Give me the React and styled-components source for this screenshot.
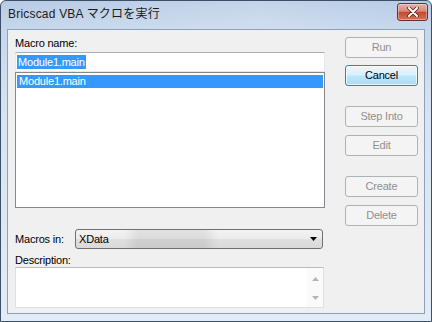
import React from 'react'
import styled, { createGlobalStyle } from 'styled-components'

const GlobalStyle = createGlobalStyle`
  html, body {
    margin: 0;
    padding: 0;
    background: #ffffff;
  }
  body {
    font-family: "Liberation Sans", Arial, sans-serif;
    font-size: 11px;
    letter-spacing: -0.2px;
    color: #000;
  }
`

const Window = styled.div`
  width: 432px;
  height: 322px;
  box-sizing: border-box;
  border: 1px solid #3b5066;
  border-radius: 6px 6px 0 0;
  background: linear-gradient(to bottom, #b7cbe4 0px, #c6d7ec 28px, #d8e4f2 120px, #e3ebf6 100%);
  display: flex;
  flex-direction: column;
  overflow: hidden;
`

const TitleBar = styled.div`
  height: 28px;
  flex: none;
  display: flex;
  align-items: flex-start;
  padding-left: 7px;
  background: linear-gradient(to right, rgba(255,255,255,0) 0%, rgba(255,255,255,0.18) 60%, rgba(255,255,255,0) 100%);
`

const Title = styled.div`
  margin-top: 5px;
  font-size: 12px;
  letter-spacing: 0.2px;
  line-height: 16px;
  color: #1b1b1b;
  font-family: "Liberation Sans", "Noto Sans CJK JP", sans-serif;
`

const CloseButton = styled.div`
  margin: 2px 3px 0 auto;
  width: 31px;
  height: 18px;
  box-sizing: border-box;
  border: 1px solid #6e3025;
  border-radius: 3px;
  background: linear-gradient(to bottom, #e7b1a6 0%, #d9887a 45%, #c44a32 52%, #d2735a 100%);
  box-shadow: inset 0 0 0 1px rgba(255, 255, 255, 0.35);
  display: flex;
  align-items: center;
  justify-content: center;
`

const Frame = styled.div`
  flex: 1;
  display: flex;
  padding: 0 6px 7px 6px;
`

const Client = styled.div`
  flex: 1;
  display: flex;
  background: #f0f0f0;
  border: 1px solid #8ca1ba;
  padding: 7px 6px 0 7px;
`

const LeftColumn = styled.div`
  width: 310px;
  display: flex;
  flex-direction: column;
`

const Label = styled.div`
  line-height: 13px;
  height: 13px;
  margin-bottom: ${p => p.$mb || 0}px;
  margin-top: ${p => p.$mt || 0}px;
  white-space: nowrap;
`

const NameInput = styled.div`
  height: 20px;
  box-sizing: border-box;
  background: #fff;
  border: 1px solid #e3e9ef;
  border-top-color: #abadb3;
  padding: 2px 1px 0 1px;
`

const Selected = styled.span`
  display: inline-block;
  background: #3399ff;
  color: #fff;
  line-height: 14px;
  padding: 0 1px 0 1px;
`

const ListBox = styled.div`
  height: 136px;
  box-sizing: border-box;
  background: #fff;
  border: 1px solid #828790;
  padding: 2px 1px;
`

const ListItem = styled.div`
  background: ${p => (p.$selected ? '#3399ff' : 'transparent')};
  color: ${p => (p.$selected ? '#fff' : '#000')};
  line-height: 13px;
  padding-left: 2px;
`

const ComboRow = styled.div`
  display: flex;
  align-items: center;
  margin-top: 21px;
  height: 20px;
`

const ComboLabel = styled.div`
  width: 60px;
  flex: none;
`

const Combo = styled.div`
  flex: 1;
  height: 20px;
  box-sizing: border-box;
  margin-right: 2px;
  border: 1px solid #707070;
  border-radius: 3px;
  background:
    linear-gradient(to right, rgba(0,0,0,0) 48px, rgba(0,0,0,0.07) 62px, rgba(0,0,0,0.07) 128px, rgba(0,0,0,0) 142px),
    linear-gradient(to bottom, #f3f3f3 0%, #ebebeb 50%, #e0e0e0 51%, #d9d9d9 100%);
  display: flex;
  align-items: center;
  padding: 0 5px 0 3px;
`

const ComboText = styled.div`
  flex: 1;
  line-height: 13px;
`

const DescBox = styled.div`
  margin-top: 0;
  height: 41px;
  box-sizing: border-box;
  margin-right: 1px;
  background: #fff;
  border: 1px solid #dcdfe3;
  border-top-color: #b9bcc1;
  display: flex;
  justify-content: flex-end;
`

const ScrollBar = styled.div`
  width: 16px;
  display: flex;
  flex-direction: column;
  justify-content: space-between;
  align-items: center;
  padding: 9px 0 7px;
  background: #fafafa;
`

const ButtonColumn = styled.div`
  margin-left: 20px;
  width: 73px;
  display: flex;
  flex-direction: column;
  padding-top: 0;
`

const Button = styled.div`
  height: 21px;
  box-sizing: border-box;
  margin-top: ${p => p.$mt || 0}px;
  border: 1px solid ${p => (p.$focused ? '#3c7fb1' : '#adb2b5')};
  border-radius: 3px;
  background: ${p =>
    p.$focused
      ? 'linear-gradient(to bottom, #eaf6fd 0%, #d9f0fc 48%, #bee6fd 52%, #a9dbf6 100%)'
      : '#f4f4f4'};
  box-shadow: ${p => (p.$focused ? 'inset 0 0 0 1px rgba(255,255,255,0.7)' : 'none')};
  color: ${p => (p.$focused ? '#000' : '#8f8f8f')};
  display: flex;
  align-items: center;
  justify-content: center;
  line-height: 13px;
`

const Arrow = ({ dir, color }) => (
  <svg width="7" height="4" viewBox="0 0 7 4">
    {dir === 'up'
      ? <polygon points="0,4 7,4 3.5,0" fill={color} />
      : <polygon points="0,0 7,0 3.5,4" fill={color} />}
  </svg>
)

const CloseIcon = () => (
  <svg width="12" height="10" viewBox="0 0 12 10">
    <path d="M2 1 L10 9 M10 1 L2 9" stroke="#5b2016" strokeWidth="3.6" strokeLinecap="round" />
    <path d="M2 1 L10 9 M10 1 L2 9" stroke="#ffffff" strokeWidth="2" strokeLinecap="round" />
  </svg>
)

const App = () => {
  const macros = ['Module1.main']
  return (
    <>
      <GlobalStyle />
      <Window>
        <TitleBar>
          <Title>Bricscad VBA マクロを実行</Title>
          <CloseButton><CloseIcon /></CloseButton>
        </TitleBar>
        <Frame>
          <Client>
            <LeftColumn>
              <Label $mb={2}>Macro name:</Label>
              <NameInput><Selected>Module1.main</Selected></NameInput>
              <ListBox>
                {macros.map((m, i) => (
                  <ListItem key={m} $selected={i === 0}>{m}</ListItem>
                ))}
              </ListBox>
              <ComboRow>
                <ComboLabel>Macros in:</ComboLabel>
                <Combo>
                  <ComboText>XData</ComboText>
                  <Arrow dir="down" color="#000" />
                </Combo>
              </ComboRow>
              <Label $mt={5}>Description:</Label>
              <DescBox>
                <ScrollBar>
                  <Arrow dir="up" color="#b4b4b4" />
                  <Arrow dir="down" color="#b4b4b4" />
                </ScrollBar>
              </DescBox>
            </LeftColumn>
            <ButtonColumn>
              <Button>Run</Button>
              <Button $focused $mt={7}>Cancel</Button>
              <Button $mt={20}>Step Into</Button>
              <Button $mt={8}>Edit</Button>
              <Button $mt={20}>Create</Button>
              <Button $mt={8}>Delete</Button>
            </ButtonColumn>
          </Client>
        </Frame>
      </Window>
    </>
  )
}

export default App
